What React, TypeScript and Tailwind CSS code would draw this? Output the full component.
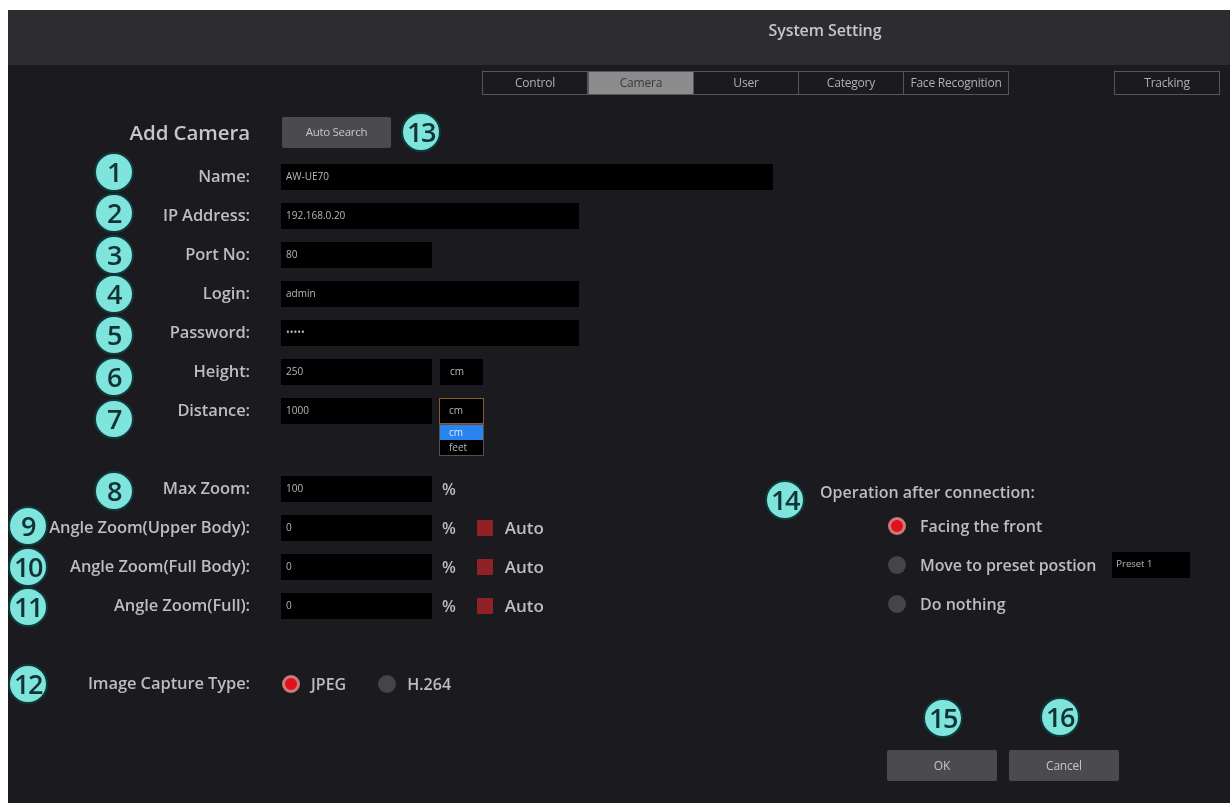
import React from "react";

function Badge({ n, className = "" }: { n: number; className?: string }) {
  return (
    <div
      className={
        "flex h-[40px] w-[40px] shrink-0 items-center justify-center rounded-full border-2 border-[#0f3a3c] bg-[#7fe5dc] text-[27px] font-semibold tracking-[-1.5px] text-[#123336] " +
        className
      }
    >
      {n}
    </div>
  );
}

function Field({ value, width }: { value: string; width: string }) {
  return (
    <div className={"flex h-[26px] items-center bg-black pl-[5px] text-[10px] text-[#b8b8b8] " + width}>{value}</div>
  );
}

function Row({ label, badge, badgeClass, children }: { label: string; badge: number; badgeClass: string; children: React.ReactNode }) {
  return (
    <div className="relative flex h-[39px] items-center">
      <div className="w-[242px] shrink-0 text-right text-[16.5px] font-semibold tracking-[-0.1px] whitespace-nowrap text-[#bdbdbd]">{label}</div>
      <div className="ml-[31px] flex items-center">{children}</div>
      <Badge n={badge} className={"absolute " + badgeClass} />
    </div>
  );
}

function Radio({ on }: { on?: boolean }) {
  return on ? (
    <div className="h-[18px] w-[18px] rounded-full border-[3px] border-[#c97a7a] bg-[#e2101c]" />
  ) : (
    <div className="h-[18px] w-[18px] rounded-full bg-[#454547]" />
  );
}

function Percent() {
  return <span className="ml-[10px] text-[16px] font-semibold text-[#bdbdbd]">%</span>;
}

function Auto() {
  return (
    <div className="ml-[21px] flex items-center">
      <div className="h-[16px] w-[16px] rounded-[1px] bg-[#8f2226]" />
      <span className="ml-[12px] text-[17px] font-semibold text-[#bdbdbd]">Auto</span>
    </div>
  );
}

function Tab({ label, active, className = "" }: { label: string; active?: boolean; className?: string }) {
  return (
    <div
      className={
        "flex h-[24px] w-[106px] items-center justify-center border border-[#55555a] text-[12px] tracking-[-0.2px] whitespace-nowrap " +
        (active ? "border-[#8c8c8c] bg-[#8c8c8c] text-[#3a3a3a] " : "text-[#b0b0b0] ") +
        className
      }
    >
      {label}
    </div>
  );
}

export default function App() {
  return (
    <div className="h-[807px] w-[1232px] overflow-hidden bg-white pt-[10px] pl-[8px] font-['Open_Sans',sans-serif]">
      <div className="h-[793px] w-[1222px] bg-[#1b1b1f] blur-[0.6px]">
        <div className="flex h-[55px] items-start justify-center bg-[#2d2d31] pt-[8px] pl-[412px] text-[16px] font-semibold tracking-[-0.1px] text-[#c6c6c6]">
          System Setting
        </div>

        <div className="mt-[6px] flex pl-[474px]">
          <Tab label="Control" />
          <Tab label="Camera" active />
          <Tab label="User" className="-ml-px" />
          <Tab label="Category" className="-ml-px" />
          <Tab label="Face Recognition" className="-ml-px" />
          <Tab label="Tracking" className="ml-[105px]" />
        </div>

        <div className="mt-[21px] flex h-[32px] items-center">
          <div className="w-[242px] text-right text-[20.5px] font-semibold tracking-[-0.1px] text-[#c6c6c6]">Add Camera</div>
          <div className="ml-[32px] flex h-[31px] w-[109px] items-center justify-center rounded-[2px] bg-[#4b4b4f] text-[11.5px] tracking-[-0.3px] text-[#c6c6c6]">
            Auto Search
          </div>
          <Badge n={13} className="ml-[10px]" />
        </div>

        <div className="mt-[9px]">
          <Row label="Name:" badge={1} badgeClass="left-[86px] top-[-5px]">
            <Field value="AW-UE70" width="w-[492px]" />
          </Row>
          <Row label="IP Address:" badge={2} badgeClass="left-[86px] top-[-3px]">
            <Field value="192.168.0.20" width="w-[298px]" />
          </Row>
          <Row label="Port No:" badge={3} badgeClass="left-[86px] top-[0px]">
            <Field value="80" width="w-[151px]" />
          </Row>
          <Row label="Login:" badge={4} badgeClass="left-[86px] top-[0px]">
            <Field value="admin" width="w-[298px]" />
          </Row>
          <Row label="Password:" badge={5} badgeClass="left-[86px] top-[2px]">
            <Field value="•••••" width="w-[298px]" />
          </Row>
          <Row label="Height:" badge={6} badgeClass="left-[86px] top-[5px]">
            <Field value="250" width="w-[151px]" />
            <div className="ml-[8px] flex h-[26px] w-[43px] items-center bg-black pl-[10px] text-[10px] text-[#b8b8b8]">cm</div>
          </Row>
          <Row label="Distance:" badge={7} badgeClass="left-[86px] top-[8px]">
            <Field value="1000" width="w-[151px]" />
            <div className="relative ml-[7px] flex h-[26px] w-[45px] items-center border border-[#8a5a2a] bg-black pl-[9px] text-[10px] text-[#b8b8b8]">
              cm
              <div className="absolute top-[25px] left-[-1px] w-[45px] border border-[#55504a] bg-black text-[10px] leading-[15px]">
                <div className="bg-[#2a84f0] pl-[9px] text-[#d8e8ff]">cm</div>
                <div className="pl-[9px] text-[#b8b8b8]">feet</div>
              </div>
            </div>
          </Row>
        </div>

        <div className="mt-[39px] flex h-[234px]">
          <div className="w-[772px]">
            <Row label="Max Zoom:" badge={8} badgeClass="left-[86px] top-[2px]">
              <Field value="100" width="w-[151px]" />
              <Percent />
            </Row>
            <Row label="Angle Zoom(Upper Body):" badge={9} badgeClass="left-[0px] top-[-2px]">
              <Field value="0" width="w-[151px]" />
              <Percent />
              <Auto />
            </Row>
            <Row label="Angle Zoom(Full Body):" badge={10} badgeClass="left-[0px] top-[0px]">
              <Field value="0" width="w-[151px]" />
              <Percent />
              <Auto />
            </Row>
            <Row label="Angle Zoom(Full):" badge={11} badgeClass="left-[0px] top-[1px]">
              <Field value="0" width="w-[151px]" />
              <Percent />
              <Auto />
            </Row>
            <div className="h-[39px]" />
            <Row label="Image Capture Type:" badge={12} badgeClass="left-[0px] top-[0px]">
              <div className="ml-[1px] flex items-center text-[16px] font-semibold text-[#bdbdbd]">
                <Radio on />
                <span className="ml-[11px]">JPEG</span>
                <div className="ml-[32px]">
                  <Radio />
                </div>
                <span className="ml-[11px]">H.264</span>
              </div>
            </Row>
          </div>

          <div className="pt-[8px] text-[16px] font-semibold text-[#bdbdbd]">
            <div className="relative flex h-[29px] items-center pl-[40px] whitespace-nowrap">
              <Badge n={14} className="absolute top-[3px] left-[-15px]" />
              Operation after connection:
            </div>
            <div className="flex h-[39px] items-center pl-[108px]">
              <Radio on />
              <span className="ml-[14px]">Facing the front</span>
            </div>
            <div className="flex h-[39px] items-center pl-[108px] whitespace-nowrap">
              <Radio />
              <span className="ml-[14px] tracking-[-0.1px]">Move to preset postion</span>
              <div className="ml-[16px] flex h-[26px] w-[78px] shrink-0 items-center bg-black pl-[4px] text-[9.5px] font-normal text-[#b8b8b8]">Preset 1</div>
            </div>
            <div className="flex h-[39px] items-center pl-[108px]">
              <Radio />
              <span className="ml-[14px]">Do nothing</span>
            </div>
          </div>
        </div>

        <div className="mt-[47px] flex gap-[12px] pl-[879px] text-[12px] tracking-[-0.2px] text-[#c6c6c6]">
          <div className="relative flex h-[31px] w-[110px] items-center justify-center rounded-[2px] bg-[#4b4b4f]">
            OK
            <Badge n={15} className="absolute top-[-52px] left-[36px]" />
          </div>
          <div className="relative flex h-[31px] w-[110px] items-center justify-center rounded-[2px] bg-[#4b4b4f]">
            Cancel
            <Badge n={16} className="absolute top-[-53px] left-[31px]" />
          </div>
        </div>
      </div>
    </div>
  );
}
